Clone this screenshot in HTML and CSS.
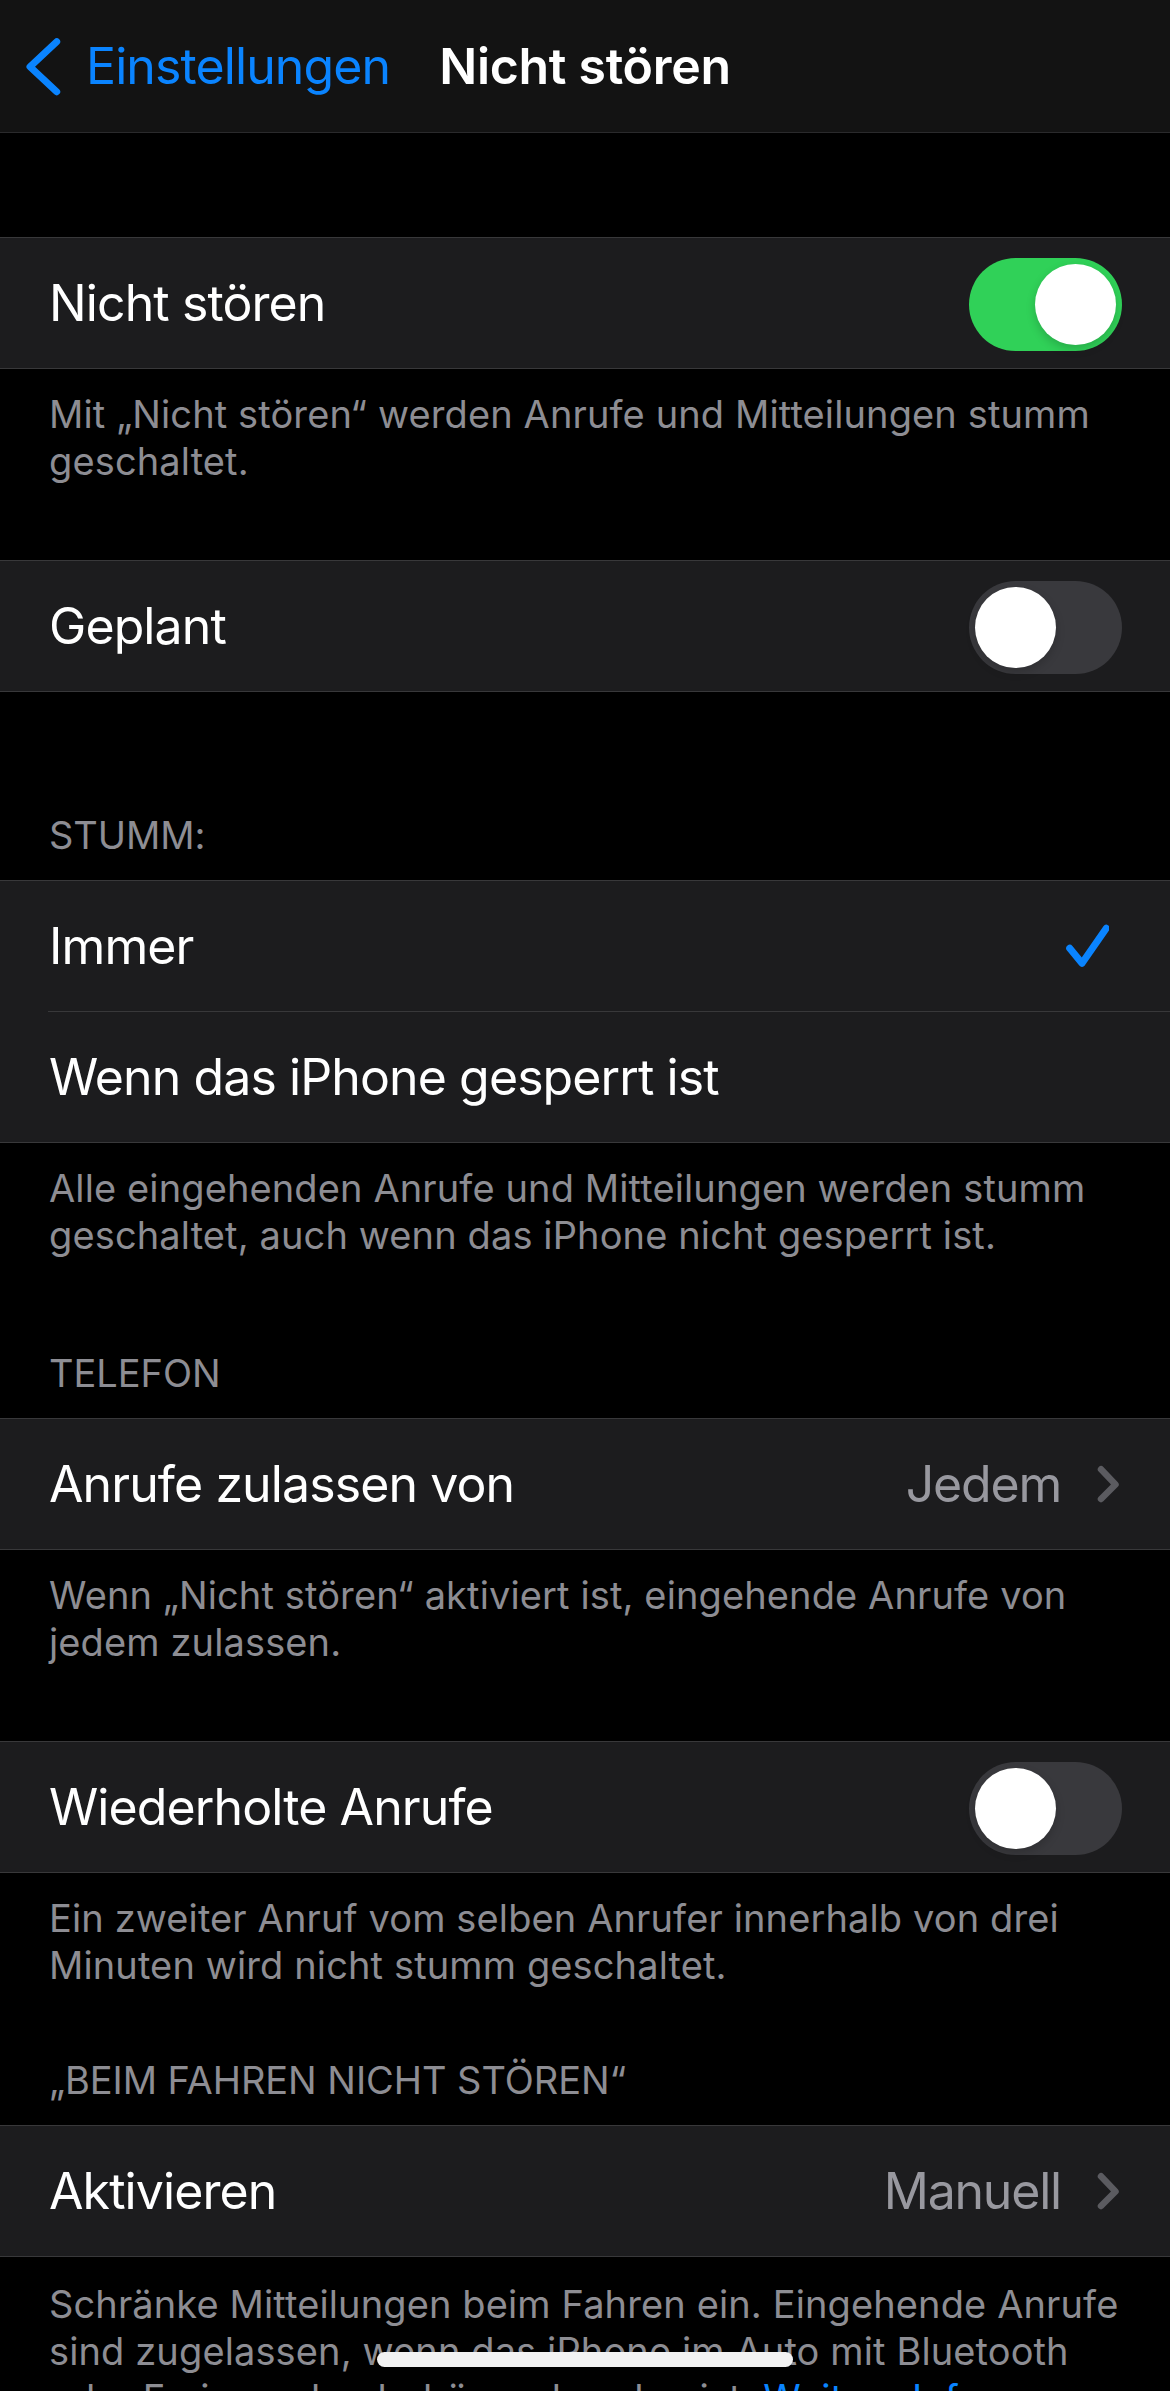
FILE: index.html
```html
<!DOCTYPE html>
<html lang="de">
<head>
<meta charset="utf-8">
<title>Nicht stören</title>
<link rel="stylesheet" href="styles.css">
</head>
<body>
<div class="screen">
  <header class="navbar">
    <a class="back" href="#">
      <svg class="back-chevron" viewBox="0 0 40 60" width="40" height="60" aria-hidden="true"><path d="M32.7 4.7 L6 29.7 L32.7 54.7" fill="none" stroke="#0a84ff" stroke-width="7" stroke-linecap="round" stroke-linejoin="round"/></svg>
      <span class="back-label">Einstellungen</span>
    </a>
    <h1 class="nav-title">Nicht stören</h1>
    <span class="nav-spacer"></span>
  </header>

  <main class="content">
    <section class="group g1">
      <div class="cells">
        <div class="cell"><div class="cell-body">
          <span class="label">Nicht stören</span>
          <span class="switch on"><span class="knob"></span></span>
        </div></div>
      </div>
      <p class="footer">Mit „Nicht stören“ werden Anrufe und Mitteilungen stumm geschaltet.</p>
    </section>

    <section class="group g2">
      <div class="cells">
        <div class="cell"><div class="cell-body">
          <span class="label">Geplant</span>
          <span class="switch"><span class="knob"></span></span>
        </div></div>
      </div>
    </section>

    <section class="group g3">
      <h2 class="header">STUMM:</h2>
      <div class="cells">
        <div class="cell"><div class="cell-body">
          <span class="label">Immer</span>
          <svg class="check" viewBox="0 0 44 44" width="44" height="44" aria-hidden="true"><path d="M4.7 24.3 L17 39.3 L41.3 4.3" fill="none" stroke="#0a84ff" stroke-width="7" stroke-linecap="round" stroke-linejoin="round"/></svg>
        </div></div>
        <div class="cell"><div class="cell-body">
          <span class="label">Wenn das iPhone gesperrt ist</span>
        </div></div>
      </div>
      <p class="footer">Alle eingehenden Anrufe und Mitteilungen werden stumm geschaltet, auch wenn das iPhone nicht gesperrt ist.</p>
    </section>

    <section class="group g4">
      <h2 class="header">TELEFON</h2>
      <div class="cells">
        <div class="cell"><div class="cell-body">
          <span class="label">Anrufe zulassen von</span>
          <span class="value">Jedem</span>
          <svg class="disclosure" viewBox="0 0 24 40" width="24" height="40" aria-hidden="true"><path d="M5 5.3 L19.5 20.5 L5 35" fill="none" stroke="#5b5b60" stroke-width="6.5" stroke-linecap="round" stroke-linejoin="round"/></svg>
        </div></div>
      </div>
      <p class="footer">Wenn „Nicht stören“ aktiviert ist, eingehende Anrufe von jedem zulassen.</p>
    </section>

    <section class="group g5">
      <div class="cells">
        <div class="cell"><div class="cell-body">
          <span class="label">Wiederholte Anrufe</span>
          <span class="switch"><span class="knob"></span></span>
        </div></div>
      </div>
      <p class="footer">Ein zweiter Anruf vom selben Anrufer innerhalb von drei Minuten wird nicht stumm geschaltet.</p>
    </section>

    <section class="group g6">
      <h2 class="header">„BEIM FAHREN NICHT STÖREN“</h2>
      <div class="cells">
        <div class="cell"><div class="cell-body">
          <span class="label">Aktivieren</span>
          <span class="value">Manuell</span>
          <svg class="disclosure" viewBox="0 0 24 40" width="24" height="40" aria-hidden="true"><path d="M5 5.3 L19.5 20.5 L5 35" fill="none" stroke="#5b5b60" stroke-width="6.5" stroke-linecap="round" stroke-linejoin="round"/></svg>
        </div></div>
      </div>
      <p class="footer last">Schränke Mitteilungen beim Fahren ein. Eingehende Anrufe sind zugelassen, wenn das iPhone im Auto mit Bluetooth oder Freisprechzubehör verbunden ist. <a class="link" href="#">Weitere Infos …</a></p>
    </section>
  </main>

  <div class="home-indicator"></div>
</div>
</body>
</html>
```

FILE: styles.css
```css
* { box-sizing: border-box; }

html, body {
  margin: 0;
  padding: 0;
  background: #000;
}

body {
  font-family: Inter, "Noto Sans", "Liberation Sans", sans-serif;
  color: #fff;
  -webkit-font-smoothing: antialiased;
}

.screen {
  width: 1170px;
  min-height: 2391px;
  background: #000;
}

/* Navigation bar */
.navbar {
  display: grid;
  grid-template-columns: 1fr auto 1fr;
  align-items: center;
  height: 133px;
  background: #131313;
  border-bottom: 1px solid #2a2a2c;
}

.back {
  display: flex;
  align-items: center;
  text-decoration: none;
  color: #0a84ff;
  padding-left: 24px;
  height: 100%;
}

.back-chevron {
  display: block;
  margin-top: 2px;
}

.back-label {
  margin-left: 22px;
  font-size: 50px;
  letter-spacing: -0.9px;
  line-height: 1;
}

.nav-title {
  margin: 0;
  font-size: 50px;
  font-weight: 600;
  letter-spacing: -0.3px;
  line-height: 1;
}

/* Groups */
.group { margin: 0; }
.g1 { margin-top: 104px; }
.g2 { margin-top: 75px; }
.g3 { margin-top: 120px; }
.g4 { margin-top: 91px; }
.g5 { margin-top: 75px; }
.g6 { margin-top: 68px; }

.header {
  margin: 0;
  padding: 0 48px 21px 49px;
  font-size: 38px;
  font-weight: 400;
  line-height: 47px;
  letter-spacing: -0.05px;
  color: #8d8d93;
}

.footer {
  margin: 0;
  padding: 22px 20px 0 49px;
  font-size: 38px;
  line-height: 47px;
  letter-spacing: 0.12px;
  color: #8d8d93;
}

.footer.last {
  padding-top: 24px;
}

.link {
  color: #0a84ff;
  text-decoration: none;
}

/* Cells */
.cells {
  background: #1c1c1e;
  border-top: 1px solid #38383a;
  border-bottom: 1px solid #38383a;
}

.cell {
  padding-left: 48px;
}

.cell-body {
  display: flex;
  align-items: center;
  height: 130px;
  padding-left: 1px;
  padding-right: 48px;
}

.cell:not(:last-child) .cell-body {
  height: 131px;
  border-bottom: 1px solid #38383a;
}

.label {
  flex: 1;
  font-size: 50px;
  letter-spacing: -0.9px;
  color: #fff;
  white-space: nowrap;
}

.value {
  font-size: 50px;
  letter-spacing: -1.2px;
  color: #98989f;
  margin-right: 35px;
}

.check {
  display: block;
  margin-right: 13px;
}

.disclosure {
  display: block;
  margin-right: 2px;
}

/* Switch */
.switch {
  position: relative;
  display: block;
  width: 153px;
  height: 93px;
  border-radius: 47px;
  background: #39393d;
  margin-top: 2px;
}

.switch.on {
  background: #30d158;
}

.knob {
  position: absolute;
  top: 6px;
  left: 6px;
  width: 81px;
  height: 81px;
  border-radius: 50%;
  background: #fff;
  box-shadow: 0 4px 10px rgba(0, 0, 0, 0.18);
}

.switch.on .knob {
  left: 66px;
}

/* Home indicator */
.home-indicator {
  position: fixed;
  left: 377px;
  bottom: 24px;
  width: 416px;
  height: 15px;
  border-radius: 8px;
  background: #f2f2f2;
}
```
